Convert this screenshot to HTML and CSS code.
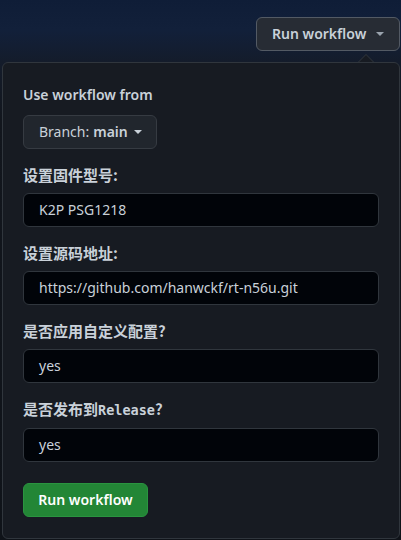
FILE: index.html
```html
<!DOCTYPE html>
<html lang="zh-CN">
<head>
<meta charset="utf-8">
<link rel="stylesheet" href="styles.css">
</head>
<body>
<div class="page">
  <div class="topbar">
    <button class="btn btn-top">Run workflow <span class="caret"></span></button>
  </div>
  <div class="popover">
    <div class="heading">Use workflow from</div>
    <button class="btn btn-branch">Branch: <b>main</b> <span class="caret"></span></button>
    <div class="field">
      <label class="label">设置固件型号:</label>
      <div class="input">K2P PSG1218</div>
    </div>
    <div class="field">
      <label class="label">设置源码地址:</label>
      <div class="input">https://github.com/hanwckf/rt-n56u.git</div>
    </div>
    <div class="field">
      <label class="label">是否应用自定义配置?</label>
      <div class="input">yes</div>
    </div>
    <div class="field">
      <label class="label">是否发布到<code>Release</code>?</label>
      <div class="input">yes</div>
    </div>
    <div class="actions">
      <button class="btn btn-primary">Run workflow</button>
    </div>
  </div>
</div>
</body>
</html>
```

FILE: styles.css
```css
* { box-sizing: border-box; }
html, body {
  margin: 0;
  padding: 0;
  background: #0e1117;
}
body {
  width: 401px;
  height: 540px;
  overflow: hidden;
  font-family: "Noto Sans", "Noto Sans CJK SC", sans-serif;
  font-size: 14px;
  color: #c9d1d9;
  background: linear-gradient(180deg, #0f1d37 0px, #12203a 30px, #141c2b 62px, #12161d 120px, #0f1319 540px);
}
.page {
  display: flex;
  flex-direction: column;
}
.topbar {
  height: 62px;
  display: flex;
  justify-content: flex-end;
  align-items: flex-start;
  padding-top: 17px;
  padding-right: 1px;
}
.btn {
  font-family: inherit;
  font-size: 14px;
  display: inline-flex;
  align-items: center;
  border-radius: 6px;
  cursor: pointer;
  line-height: 20px;
}
.caret {
  display: inline-block;
  width: 0;
  height: 0;
  border-left: 4px solid transparent;
  border-right: 4px solid transparent;
  border-top: 4px solid currentColor;
  margin-left: 8px;
}
.btn-top {
  width: 144px;
  height: 34px;
  padding: 0 15px;
  justify-content: space-between;
  background: #272c34;
  border: 1px solid #535a64;
  color: #c9d1d9;
  font-weight: 600;
}
.btn-top .caret { margin-left: 6px; color: #9aa3ad; }
.popover {
  position: relative;
  margin-left: 2px;
  width: 398px;
  height: 477px;
  background: #171b22;
  border: 1px solid #30363d;
  border-radius: 6px;
  padding: 22px 20px 19px;
  display: flex;
  flex-direction: column;
  align-items: flex-start;
}
.popover::before {
  content: "";
  position: absolute;
  top: -9px;
  right: 25px;
  width: 0;
  height: 0;
  border-left: 8px solid transparent;
  border-right: 8px solid transparent;
  border-bottom: 8px solid #30363d;
}
.popover::after {
  content: "";
  position: absolute;
  top: -8px;
  right: 26px;
  width: 0;
  height: 0;
  border-left: 7px solid transparent;
  border-right: 7px solid transparent;
  border-bottom: 7px solid #171b22;
}
.heading {
  font-weight: 600;
  line-height: 20px;
  color: #c9d1d9;
  margin-bottom: 10px;
}
.btn-branch {
  height: 34px;
  width: 134px;
  padding: 0 15px;
  background: #21262d;
  border: 1px solid #363b42;
  color: #c9d1d9;
  font-weight: 400;
}
.btn-branch b { font-weight: 600; margin-left: 4px; }
.btn-branch .caret { margin-left: 6px; }
.field {
  width: 100%;
  margin-top: 16px;
  display: flex;
  flex-direction: column;
  gap: 8px;
}
.label {
  font-weight: 700;
  font-size: 15px;
  line-height: 20px;
  color: #c9d1d9;
  font-family: "Noto Sans CJK SC", "Noto Sans", sans-serif;
}
.label code {
  font-family: "DejaVu Sans Mono", "Liberation Mono", monospace;
  font-size: 13.5px;
  font-weight: 700;
}
.input {
  width: 100%;
  height: 34px;
  background: #010409;
  border: 1px solid #30363d;
  border-radius: 6px;
  padding: 0 15px;
  line-height: 32px;
  color: #c9d1d9;
}
.actions {
  margin-top: 21px;
}
.btn-primary {
  height: 34px;
  width: 125px;
  justify-content: center;
  background: #238636;
  border: 1px solid #2a9440;
  color: #ffffff;
  font-weight: 600;
}
```
